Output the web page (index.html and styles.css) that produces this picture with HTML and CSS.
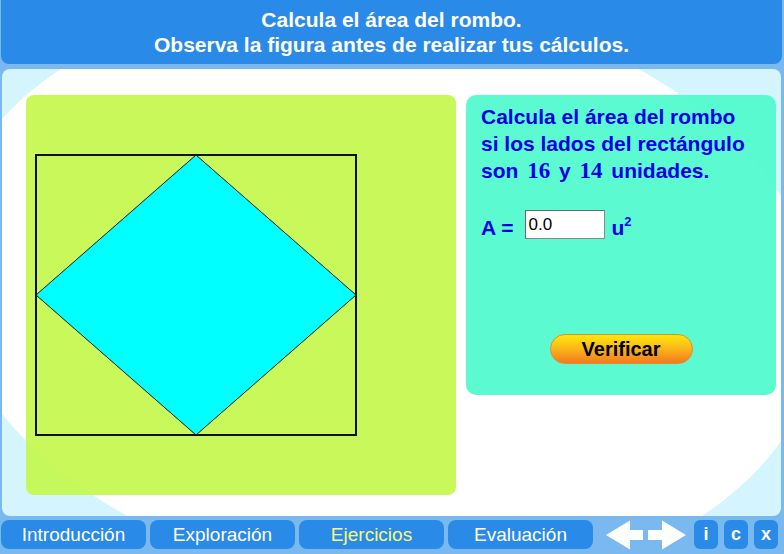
FILE: index.html
```html
<!DOCTYPE html>
<html lang="es">
<head>
<meta charset="utf-8">
<title>Calcula el área del rombo</title>
<link rel="stylesheet" href="styles.css">
</head>
<body>
<div class="app">
  <header class="header">
    <div>Calcula el área del rombo.</div>
    <div>Observa la figura antes de realizar tus cálculos.</div>
  </header>
  <main class="stage">
    <section class="figure-panel">
      <svg class="figure" width="430" height="400" viewBox="0 0 430 400">
        <polygon points="170,60 330,200 170,340 10,200" fill="#00ffff" stroke="#0a1a1a" stroke-width="1"/>
        <rect x="10" y="60" width="320" height="280" fill="none" stroke="#111" stroke-width="2"/>
      </svg>
    </section>
    <section class="task-panel">
      <p class="question">
        <span class="qline">Calcula el área del rombo</span>
        <span class="qline">si los lados del rectángulo</span>
        <span class="qline">son <span class="num">16</span> y <span class="num">14</span> unidades.</span>
      </p>
      <div class="answer-row">
        <span class="label">A =</span>
        <input class="answer" type="text" value="0.0">
        <span class="unit">u<sup>2</sup></span>
      </div>
      <div class="actions">
        <button class="verify" type="button">Verificar</button>
      </div>
    </section>
  </main>
  <nav class="nav">
    <a class="tab">Introducción</a>
    <a class="tab">Exploración</a>
    <a class="tab tab-active">Ejercicios</a>
    <a class="tab">Evaluación</a>
    <svg class="arrows" width="82" height="30" viewBox="0 0 82 30">
      <polygon points="1,15 25,0.5 25,10 38,10 38,20 25,20 25,29.5" fill="#fff"/>
      <polygon points="81,15 57,0.5 57,10 43,10 43,20 57,20 57,29.5" fill="#fff"/>
    </svg>
    <div class="tools">
      <a class="tool">i</a>
      <a class="tool">c</a>
      <a class="tool">x</a>
    </div>
  </nav>
</div>
</body>
</html>
```
FILE: styles.css
```css
html, body {
  margin: 0;
  padding: 0;
}
body {
  background: #7ab8f0;
  font-family: "Liberation Sans", Arial, sans-serif;
}
.app {
  width: 784px;
  height: 554px;
  display: flex;
  flex-direction: column;
}
.header {
  margin: 0 2px 0 1px;
  height: 64px;
  box-sizing: border-box;
  padding-top: 7px;
  background: #2a8ae8;
  border-radius: 0 0 8px 8px;
  color: #fff;
  font-weight: bold;
  font-size: 21px;
  line-height: 25px;
  text-align: center;
}
.stage {
  position: relative;
  overflow: hidden;
  margin: 5px 3px 0 2px;
  height: 447px;
  box-sizing: border-box;
  padding: 26px 0 0 24px;
  background: #d4f4fe;
  border-radius: 8px;
  display: flex;
  align-items: flex-start;
  gap: 10px;
}
.stage::before {
  content: "";
  position: absolute;
  left: -60px;
  top: -72px;
  width: 880px;
  height: 590px;
  border-radius: 50%;
  background: #fff;
  transform: rotate(7deg);
}
.figure-panel {
  position: relative;
  width: 430px;
  height: 400px;
  background: rgba(195, 247, 76, 0.92);
  border-radius: 8px;
}
.figure {
  display: block;
}
.task-panel {
  position: relative;
  width: 310px;
  height: 300px;
  box-sizing: border-box;
  padding: 8px 0 0 15px;
  background: rgba(78, 250, 204, 0.92);
  border-radius: 10px;
  color: #0000e6;
  font-weight: bold;
  font-size: 21px;
  line-height: 27px;
}
.question {
  margin: 0;
}
.qline {
  display: block;
  white-space: nowrap;
}
.num {
  font-family: "Liberation Serif", "Times New Roman", serif;
  font-weight: bold;
  font-size: 23px;
  line-height: 1;
  margin: 0 3px;
}
.answer-row {
  display: flex;
  align-items: flex-start;
  margin-top: 26px;
}
.label {
  margin-top: 4px;
  white-space: pre;
}
.answer {
  margin-left: 12px;
  width: 80px;
  height: 29px;
  box-sizing: border-box;
  padding: 0 2px;
  border: 1px solid #8a8a8a;
  border-top-color: #6a6a6a;
  border-left-color: #6a6a6a;
  background: #fff;
  font-family: "Liberation Sans", Arial, sans-serif;
  font-size: 17px;
  color: #000;
}
.unit {
  margin: 4px 0 0 6px;
}
.unit sup {
  font-size: 13px;
  line-height: 0;
  vertical-align: 9px;
}
.actions {
  display: flex;
  justify-content: center;
  margin-top: 93px;
  padding-right: 15px;
}
.verify {
  width: 143px;
  height: 30px;
  border: 1px solid #e28d2c;
  border-radius: 15px;
  background: linear-gradient(to bottom, #ffe70b 0%, #fbb51a 50%, #f27a1e 100%);
  font-family: "Liberation Sans", Arial, sans-serif;
  font-weight: bold;
  font-size: 20px;
  color: #000;
  padding: 0;
}
.nav {
  display: flex;
  align-items: center;
  gap: 4px;
  margin: 4px 0 0 1px;
  height: 29px;
}
.tab {
  width: 145px;
  height: 29px;
  display: flex;
  align-items: center;
  justify-content: center;
  background: #2a8ae8;
  border-radius: 8px;
  color: #fff;
  font-size: 19px;
}
.tab-active {
  color: #f8f87a;
}
.arrows {
  display: block;
  margin-left: 8px;
}
.tools {
  display: flex;
  gap: 6px;
  margin-left: 3px;
}
.tool {
  width: 24px;
  height: 29px;
  display: flex;
  align-items: center;
  justify-content: center;
  background: #2a8ae8;
  border-radius: 6px;
  color: #fff;
  font-weight: bold;
  font-size: 18px;
}
```
